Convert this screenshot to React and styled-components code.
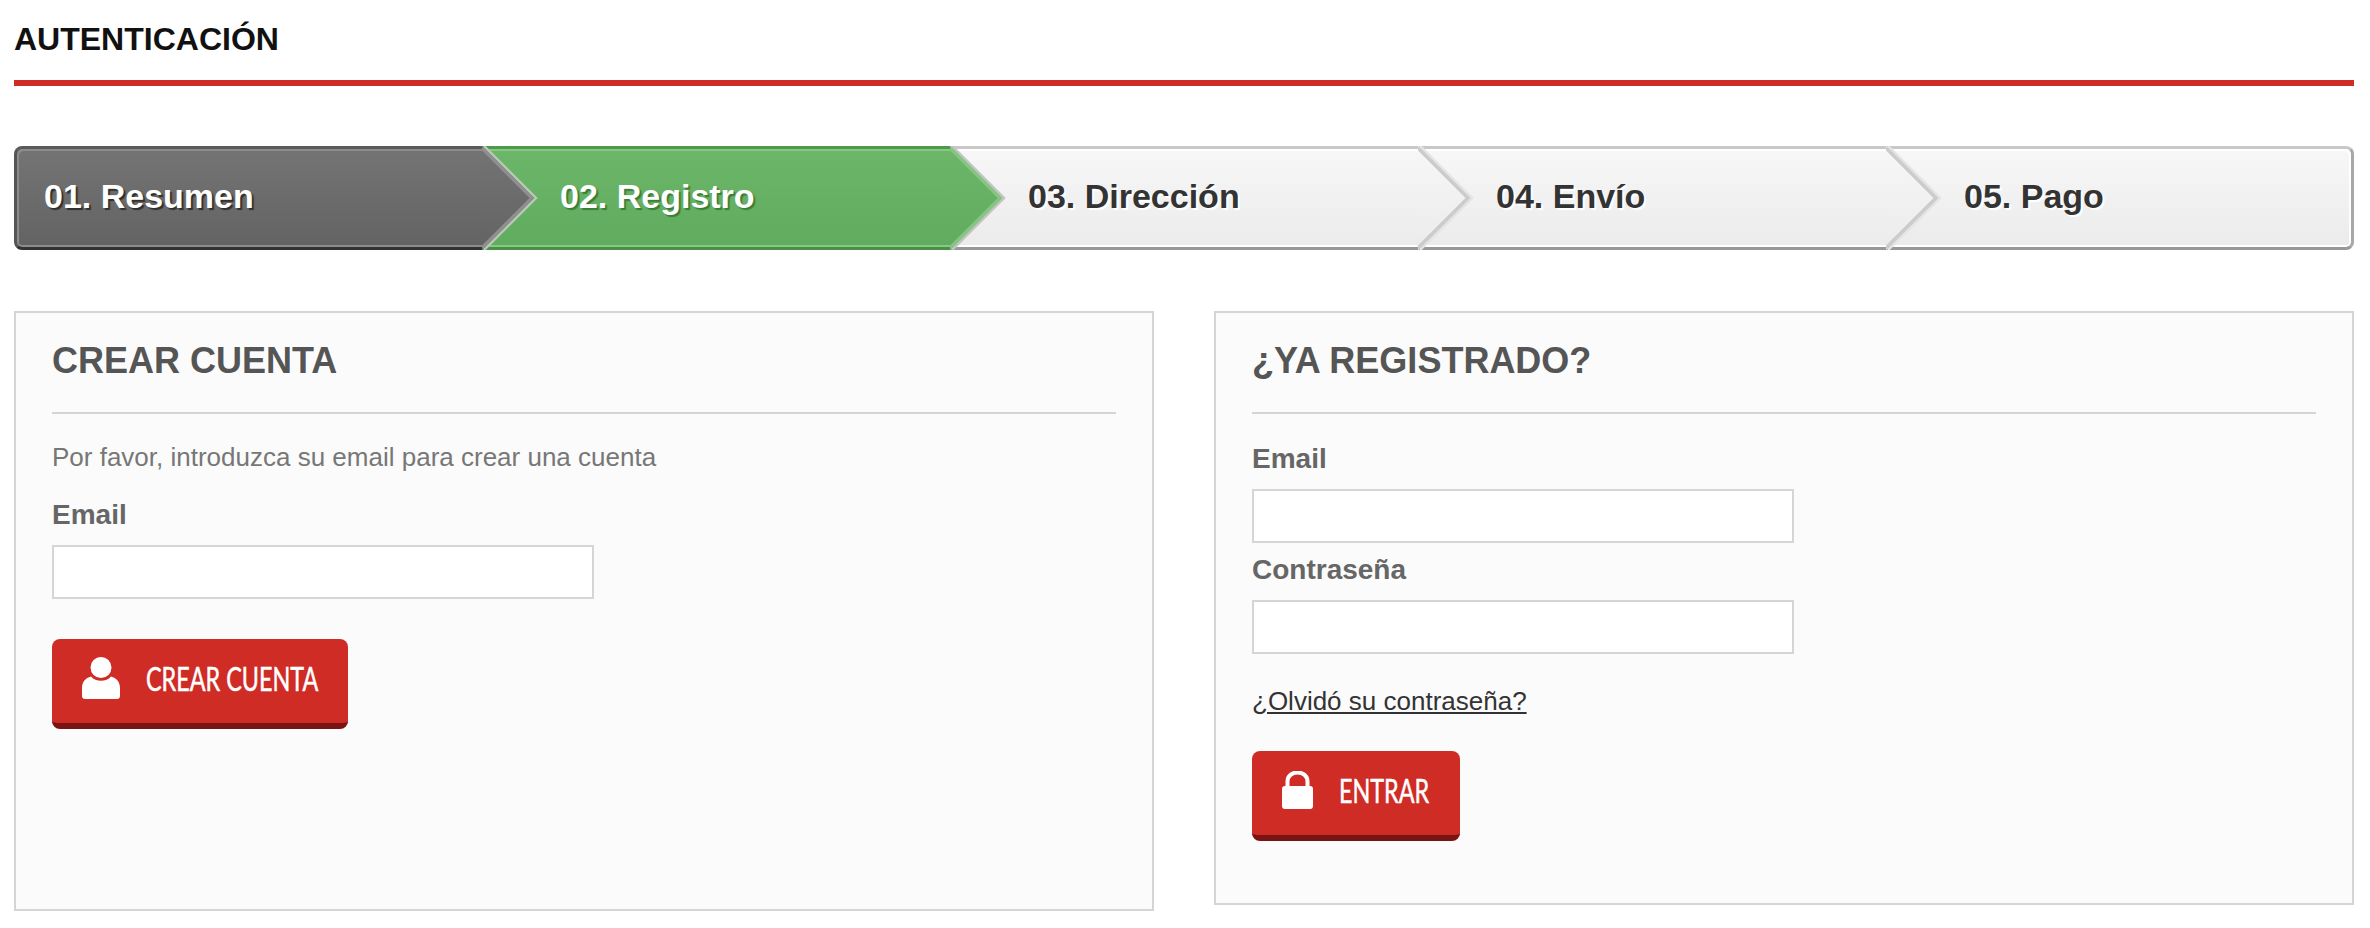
import styled, { createGlobalStyle } from 'styled-components';

const STEPS = [
  { label: '01. Resumen', tone: 'dark' },
  { label: '02. Registro', tone: 'green' },
  { label: '03. Dirección', tone: 'light' },
  { label: '04. Envío', tone: 'light' },
  { label: '05. Pago', tone: 'light' },
];

const TONES = {
  dark: {
    top: '#5a5a5a', bottom: '#333333', inset: '#8c8c8c', from: '#747474', to: '#636363',
    text: '#ffffff', shadow: '#2f2f2f', edge: '#8f8f8f', halo: '#b9c9b5',
  },
  green: {
    top: '#4e9a4a', bottom: '#4a8f45', inset: '#88c784', from: '#6bb668', to: '#60ab5d',
    text: '#ffffff', shadow: '#3c7c39', edge: '#85c482', halo: '#c4c4c4',
  },
  light: {
    top: '#c8c8c8', bottom: '#989898', inset: '#ffffff', from: '#f7f7f7', to: '#ebebeb',
    text: '#333333', shadow: '#ffffff', edge: '#cbcbcb', halo: '#e4e4e4',
  },
};

export default function App() {
  return (
    <>
      <GlobalStyle />
      <Page>
        <PageTitle>AUTENTICACIÓN</PageTitle>

        <Steps>
          {STEPS.map((step, index) => (
            <Step key={step.label} $tone={step.tone} $index={index}>
              <StepLabel $tone={step.tone}>{step.label}</StepLabel>
              {index < STEPS.length - 1 && <StepArrow tone={step.tone} id={index} />}
            </Step>
          ))}
        </Steps>

        <Columns>
          <Panel $height={600}>
            <PanelTitle>CREAR CUENTA</PanelTitle>
            <PanelBody $top={24}>
              <Intro>Por favor, introduzca su email para crear una cuenta</Intro>
              <FieldLabel>Email</FieldLabel>
              <TextInput type="text" />
              <RedButton $width={296} $top={40}>
                <UserIcon />
                <ButtonLabel>CREAR CUENTA</ButtonLabel>
              </RedButton>
            </PanelBody>
          </Panel>

          <Panel $height={594}>
            <PanelTitle>¿YA REGISTRADO?</PanelTitle>
            <PanelBody $top={26}>
              <FieldLabel>Email</FieldLabel>
              <TextInput type="text" />
              <FieldLabel $top={8}>Contraseña</FieldLabel>
              <TextInput type="password" />
              <ForgotLink href="#">¿Olvidó su contraseña?</ForgotLink>
              <RedButton $width={208} $top={31}>
                <LockIcon />
                <ButtonLabel>ENTRAR</ButtonLabel>
              </RedButton>
            </PanelBody>
          </Panel>
        </Columns>
      </Page>
    </>
  );
}

/* arrow tip hanging over the next step */
function StepArrow({ tone, id }) {
  const t = TONES[tone];
  return (
    <ArrowSvg viewBox="0 0 56 104" width="56" height="104">
      <defs>
        <linearGradient id={`arrow-${id}`} x1="0" y1="0" x2="0" y2="1">
          <stop offset="0" stopColor={t.from} />
          <stop offset="1" stopColor={t.to} />
        </linearGradient>
      </defs>
      <polygon points="0,0 52,52 0,104" fill={`url(#arrow-${id})`} />
      <polyline points="2,0 54,52 2,104" fill="none" stroke={t.halo} strokeWidth="2.500" />
      <polyline points="0,2 50,52 0,102" fill="none" stroke={t.edge} strokeWidth="3.500" />
    </ArrowSvg>
  );
}

function UserIcon() {
  return (
    <IconSvg viewBox="0 0 38 42" width="38" height="42">
      <ellipse cx="19" cy="10.5" rx="10.5" ry="10.5" fill="#fff" />
      <path d="M9 19.5c2.5 3 6 4.3 10 4.3s7.500-1.300 10-4.300c5.500 1.500 9 5.500 9 11.500v8c0 2-1.300 3-3 3H3c-1.700 0-3-1-3-3v-8c0-6 3.500-10 9-11.500z" fill="#fff" />
    </IconSvg>
  );
}

function LockIcon() {
  return (
    <IconSvg viewBox="0 0 31 38" width="31" height="38">
      <path d="M5.500 17v-6.500C5.500 4.800 10 1.500 15.500 1.500s10 3.300 10 9V17" fill="none" stroke="#fff" strokeWidth="4" />
      <rect x="0" y="15" width="31" height="23" rx="3" fill="#fff" />
    </IconSvg>
  );
}

/* styles */

const GlobalStyle = createGlobalStyle`
  html, body {
    margin: 0;
    padding: 0;
    background: #ffffff;
  }
  body {
    font-family: "Liberation Sans", Arial, sans-serif;
  }
  * { box-sizing: border-box; }
`;

const Page = styled.div`
  width: 2370px;
  height: 928px;
  padding: 0 16px 0 14px;
  overflow: hidden;
`;

const PageTitle = styled.h1`
  margin: 0 0 60px;
  height: 86px;
  padding-top: 21px;
  border-bottom: 6px solid #cf2c26;
  font-size: 32px;
  line-height: 36px;
  font-weight: 700;
  color: #111111;
`;

const Steps = styled.div`
  display: flex;
  height: 104px;
`;

const Step = styled.div`
  position: relative;
  flex: 0 0 20%;
  display: flex;
  align-items: center;
  padding-left: ${({ $index }) => ($index === 0 ? '30px' : '78px')};
  z-index: ${({ $index }) => 10 - $index};
  border-top: 3px solid ${({ $tone }) => TONES[$tone].top};
  border-bottom: 3px solid ${({ $tone }) => TONES[$tone].bottom};
  box-shadow: inset 0 2px 0 ${({ $tone }) => TONES[$tone].inset}, inset 0 -2px 0 ${({ $tone }) => TONES[$tone].inset};
  background: linear-gradient(${({ $tone }) => TONES[$tone].from}, ${({ $tone }) => TONES[$tone].to});

  &:first-child {
    border-left: 3px solid #555555;
    border-radius: 8px 0 0 8px;
    padding-left: 27px;
    box-shadow: inset 2px 2px 0 #8c8c8c, inset 0 -2px 0 #8c8c8c;
  }
  &:last-child {
    border-right: 3px solid #a8a8a8;
    border-radius: 0 8px 8px 0;
    box-shadow: inset -2px 2px 0 #ffffff, inset 0 -2px 0 #ffffff;
  }
`;

const StepLabel = styled.span`
  position: relative;
  top: -2px;
  z-index: 2;
  font-size: 34px;
  font-weight: 700;
  color: ${({ $tone }) => TONES[$tone].text};
  text-shadow: 2px 2px 1px ${({ $tone }) => TONES[$tone].shadow};
`;

const ArrowSvg = styled.svg`
  position: absolute;
  top: -3px;
  left: 100%;
  display: block;
`;

const Columns = styled.div`
  display: grid;
  grid-template-columns: 1fr 1fr;
  column-gap: 60px;
  align-items: start;
  margin-top: 61px;
`;

const Panel = styled.section`
  height: ${({ $height }) => $height}px;
  padding: 0 36px;
  background: #fbfbfb;
  border: 2px solid #d5d5d5;
`;

const PanelTitle = styled.h2`
  margin: 0;
  height: 101px;
  padding-top: 26px;
  border-bottom: 2px solid #d5d5d5;
  font-size: 36px;
  line-height: 44px;
  font-weight: 700;
  color: #555555;
`;

const PanelBody = styled.div`
  display: flex;
  flex-direction: column;
  align-items: flex-start;
  padding-top: ${({ $top }) => $top}px;
`;

const Intro = styled.p`
  margin: 0 0 20px;
  font-size: 26px;
  line-height: 38px;
  color: #777777;
`;

const FieldLabel = styled.label`
  display: block;
  margin-top: ${({ $top }) => $top || 0}px;
  margin-bottom: 11px;
  font-size: 28px;
  line-height: 38px;
  font-weight: 700;
  color: #666666;
`;

const TextInput = styled.input`
  display: block;
  width: 542px;
  height: 54px;
  background: #ffffff;
  border: 2px solid #d5d5d5;
  outline: none;
`;

const ForgotLink = styled.a`
  margin-top: 28px;
  font-size: 26px;
  line-height: 38px;
  color: #333333;
  text-decoration: underline;
`;

const RedButton = styled.button`
  display: flex;
  align-items: center;
  gap: 26px;
  width: ${({ $width }) => $width}px;
  height: 90px;
  margin-top: ${({ $top }) => $top}px;
  padding: 0 0 6px 30px;
  background: #cf2c26;
  border: none;
  border-bottom: 6px solid #7a1412;
  border-radius: 8px;
`;

const IconSvg = styled.svg`
  display: block;
  flex-shrink: 0;
`;

const ButtonLabel = styled.span`
  display: inline-block;
  font-family: Lato, "Open Sans", sans-serif;
  font-size: 32px;
  color: #ffffff;
  -webkit-text-stroke: 0.5px #ffffff;
  white-space: nowrap;
  transform: scaleX(0.73);
  transform-origin: left center;
`;
